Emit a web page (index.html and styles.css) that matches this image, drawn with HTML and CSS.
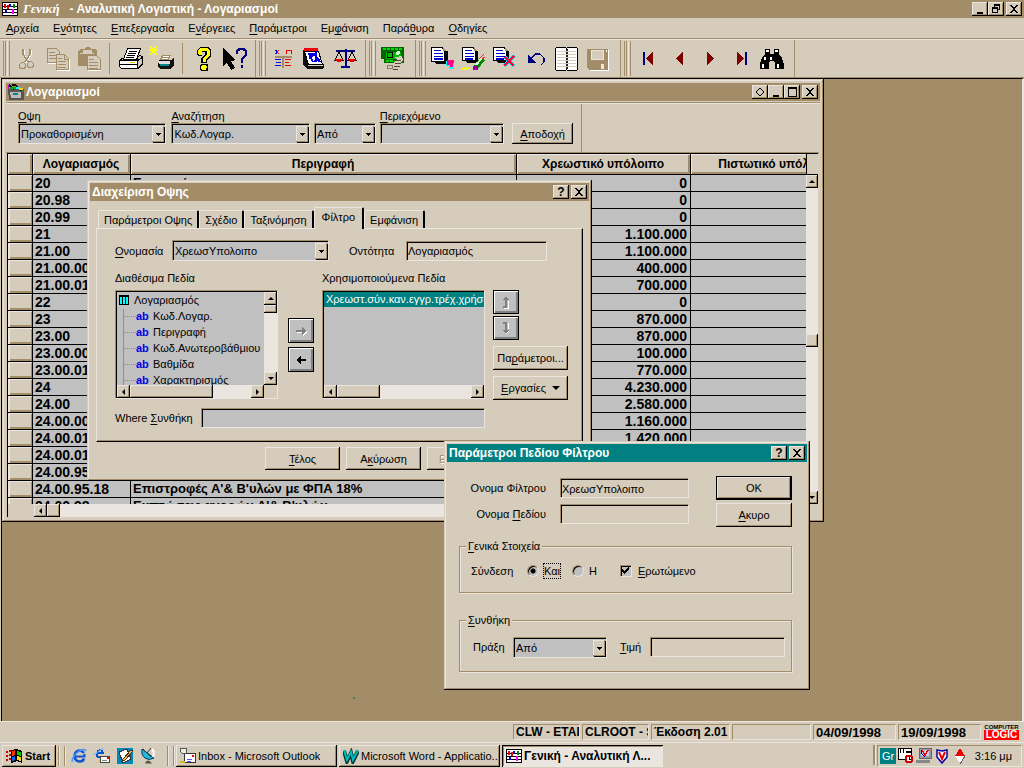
FILE: index.html
```html
<!DOCTYPE html>
<html lang="el">
<head>
<meta charset="utf-8">
<title>Γενική - Αναλυτική Λογιστική - Λογαριασμοί</title>
<link rel="stylesheet" href="styles.css">
</head>
<body>
<svg class="defs" aria-hidden="true">
  <symbol id="min" viewBox="0 0 12 10"><path d="M3 8h6v2H3z"/></symbol>
  <symbol id="close" viewBox="0 0 12 10"><path d="M2 1h2v1h1v1h2V2h1V1h2v1H9v1H8v1H7v2h1v1h1v1h1v1H8V8H7V7H5v1H4v1H2V8h1V7h1V6h1V4H4V3H3V2H2z"/></symbol>
  <symbol id="max" viewBox="0 0 12 10"><path d="M2 0h9v10H2zM3 2v7h7V2z" fill-rule="evenodd"/></symbol>
  <symbol id="restore" viewBox="0 0 12 10"><path d="M4 0h6v6H8V5h1V2H5v1H4zM2 3h6v6H2zM3 5v3h4V5z" fill-rule="evenodd"/></symbol>
  <symbol id="diamond" viewBox="0 0 12 10"><path d="M6 1l4 4-4 4-4-4z" fill="none" stroke="#000"/></symbol>
  <symbol id="grid" viewBox="0 0 16 16"><path d="M0 1h16v14H0z" fill="#000"/><path d="M1 2h14v12H1z" fill="#fff"/><path d="M1 5h14M1 8h14M1 11h14" stroke="#000"/><path d="M3 3v4M6 4v4" stroke="#e00" stroke-width="2"/><path d="M4 9v3M8 3v3" stroke="#00c" stroke-width="2"/><path d="M12 3v4" stroke="#080" stroke-width="2"/><path d="M11 8v5" stroke="#f0f" stroke-width="2"/></symbol>
</svg>

<header class="titlebar app-title">
  <svg class="i16"><use href="#grid"/></svg>
  <h1><i>Γενική</i><span>- Αναλυτική Λογιστική - Λογαριασμοί</span></h1>
  <div class="caps">
    <button class="cap" aria-label="Ελαχιστοποίηση"><svg><use href="#min"/></svg></button><button class="cap" aria-label="Επαναφορά"><svg><use href="#restore"/></svg></button><button class="cap apart" aria-label="Κλείσιμο"><svg><use href="#close"/></svg></button>
  </div>
</header>

<nav class="menu">
  <button><u>Α</u>ρχεία</button><button>Ε<u>ν</u>ότητες</button><button><u>Ε</u>πεξεργασία</button><button>Ε<u>ν</u>έργειες</button><button><u>Π</u>αράμετροι</button><button>Εμ<u>φ</u>άνιση</button><button>Παρά<u>θ</u>υρα</button><button><u>Ο</u>δηγίες</button>
</nav>

<div class="toolbar" role="toolbar">
  <div class="band"><i class="grip"></i>
    <button aria-label="Αποκοπή"><svg viewBox="0 0 24 24"><g fill="none" stroke="#fff" transform="translate(1 1)"><path d="M8 2v5l5 8M15 2v5l-5 8"/></g><g fill="none" stroke="#a28d68"><path d="M8 2v5l5 8M15 2v5l-5 8" stroke-width="1.500"/><circle cx="7.500" cy="18.500" r="3"/><circle cx="15.500" cy="17.500" r="3"/></g></svg></button>
    <button aria-label="Αντιγραφή"><svg viewBox="0 0 24 24"><g fill="none" stroke="#a28d68"><path d="M1.500 1.500h9l3 3v11h-12zM3 5h6M3 8h8M3 11h8"/><path d="M10.500 7.500h8l4 4v11h-12z" fill="#d5ccbb"/><path d="M18.500 8v4h4M12 11h4M12 14h8M12 17h8M12 20h8"/></g><path d="M2 16.500h8M11 23.500h12.500V12" stroke="#fff" fill="none"/></svg></button>
    <button aria-label="Επικόλληση"><svg viewBox="0 0 24 24"><path d="M1 4l2-2h4l2-2h3l2 2h4l2 2v15H1z" fill="#a28d68"/><path d="M6 3h9v3H6zM3 6h14v1H3z" fill="#d5ccbb"/><path d="M10.500 8.500h9l4 4v10h-13z" fill="#d5ccbb" stroke="#a28d68"/><path d="M12 12h5M12 15h9M12 18h9M12 21h9" stroke="#a28d68"/><path d="M11 23.500h13" stroke="#fff"/></svg></button>
    <i class="sep"></i>
    <button aria-label="Εκτύπωση"><svg viewBox="0 0 24 24"><path d="M8.500 1.500h13l-4 11h-13z" fill="#fff" stroke="#000"/><path d="M10 4.500h8M9 6.500h8M8 8.500h8M7 10.500h8" stroke="#000"/><path d="M.5 13.500l4-3M18 11l3-3 2.500 2-4 3.500z" fill="#d5ccbb" stroke="#000"/><path d="M.5 13.500h18v8h-16l-2-2z" fill="#fff" stroke="#000"/><path d="M1 17.500h18M19 13.500l4-3v7l-4 4" fill="none" stroke="#000"/><path d="M11 15h5v1h-5z" fill="#fc0"/></svg></button>
    <button aria-label="Γρήγορη εκτύπωση"><svg class="over" viewBox="0 0 24 24"><path d="M3.500-1v10M-1 3h9M0-1l7 9M7-1l-7 9" stroke="#ff0" stroke-width="1.500"/><path d="M12 8h9l-3 7H9z" fill="#a28d68"/><path d="M9 13h12l3-2v8l-4 3H10l-2-3z" fill="#111"/><path d="M9 14h11v3H9z" fill="#ddd"/><path d="M10 18h9" stroke="#088" stroke-width="2"/><path d="M13 9h6M12 11h6" stroke="#fff"/></svg></button>
    <i class="sep"></i>
    <button aria-label="Βοήθεια"><svg viewBox="0 0 24 24"><path d="M8 0h8l3 3v6l-4 4v3H9v-5l4-4V5h-3v4H6L5 7V3z" fill="#000"/><path d="M8 1h7l3 3v4l-4 4v3h-3v-4l4-4V4h-5v4H7L6 7V3z" fill="#ff0"/><path d="M9 17h6l1 1v5l-1 1H9l-1-1v-5z"/><path d="M10 18h4l1 2-1 3h-4l-1-3z" fill="#ff0"/></svg></button>
    <button aria-label="Τι είναι αυτό"><svg viewBox="0 0 24 24"><path d="M0 1v18l4-3 4 7 4-2-4-7 5-1z"/><path d="M14 7V4l3-2h3l3 2v4l-4 4v4M19 18v3" fill="none" stroke="#000080" stroke-width="2.500"/></svg></button>
  </div>
  <div class="band"><i class="grip"></i>
    <button aria-label="Λογιστικό σχέδιο"><svg viewBox="0 0 24 24"><path d="M4 3l4 4M8 3L4 7M15 7V3h5v4" stroke="#e00" fill="none"/><path d="M4 3h1v4" stroke="#00c" fill="none"/><path d="M4 9.500h17M11.500 9v12" stroke="#a28d68" stroke-width="2"/><path d="M4 12.500h6M5 15.500h5M4 18.500h6" stroke="#00e"/><path d="M14 12.500h6M14 15.500h4M14 18.500h6" stroke="#e00"/></svg></button>
    <button aria-label="Ημερολόγιο"><svg viewBox="0 0 24 24"><path d="M1 3h2l3 16h15l1-4v5l-2 2H5l-4-4z" fill="#111"/><path d="M2 1h14v3H2z" fill="#e00"/><path d="M2.500 4.500h14l4 13h-14z" fill="#fff" stroke="#000"/><path d="M7 7l4 8M7 11l7-5v9M12 7l6 8M6 7h6M12 14l6-1" fill="none" stroke="#00e" stroke-width="2"/></svg></button>
    <button aria-label="Ισοζύγιο"><svg viewBox="0 0 24 24"><path d="M3 4h19M12.500 2v17M8 20h9" stroke="#000080" stroke-width="2"/><path d="M6 5l-4 8h8zM19 5l-4 8h8z" fill="none" stroke="#000"/><path d="M2 12h8l-2 3H4zM15 12h8l-2 3h-4z" fill="#e00"/></svg></button>
  </div>
  <div class="band wide"><i class="grip"></i>
    <button aria-label="Ταμείο"><svg viewBox="0 0 24 24"><path d="M0 0h23v16H3V12H0z" fill="#060"/><path d="M2 2h19M5 14h9" stroke="#0d0" stroke-width="2" stroke-dasharray="3 1"/><path d="M5 5h15v7H5z" fill="#0b0"/><circle cx="9" cy="8" r="3" fill="none" stroke="#000"/><circle cx="17" cy="6" r="2" fill="#cfc"/><path d="M14 10l7-1 1 4-2 3 1 3-4 4-4 1-2-2 3-4-1-3 3-2z" fill="#d5ccbb"/><path d="M13 13h7M14 16h6M13 19h6M12 22h5" stroke="#543"/><path d="M6 18h5v3H6z" fill="#d5ccbb" stroke="#876"/></svg></button>
  </div>
  <div class="band wide"><i class="grip"></i>
    <button aria-label="Νέα εγγραφή"><svg viewBox="0 0 24 24"><path d="M13 4h4v11l-3 2H5l-2-2h10z"/><path d="M.5.5h11l2 4v10H.5z" fill="#fff" stroke="#000"/><path d="M12 0l3 4h-3z" fill="#a28d68"/><path d="M3 3.500h7M3 6.500h9M3 9.500h9M3 12h9" stroke="#00c" stroke-width="1.500"/><path d="M15 14h8v8h-5v-3h-3z" fill="#0ff"/><path d="M16 13h7v3h-1v4h-3v-2h-3z" fill="#f08"/></svg></button>
    <button aria-label="Μεταβολή εγγραφής"><svg viewBox="0 0 24 24"><path d="M13 4h3v10l-3 2H5l-2-2h10z"/><path d="M.5.5h11l2 4v9H.5z" fill="#fff" stroke="#000"/><path d="M12 0l3 4h-3z" fill="#a28d68"/><path d="M3 3.500h7M3 6.500h9M3 9.500h9M3 12h8" stroke="#00c" stroke-width="1.500"/><path d="M14 20l7-8" stroke="#080" stroke-width="5"/><path d="M14 18l6-7" stroke="#cfc" stroke-width="2"/><path d="M17 12l5-5M20 12l3-2" stroke="#f22"/><circle cx="13.500" cy="21" r="2.500" fill="#909"/><path d="M0 22l2-1 2 1 2-1 2 1" stroke="#ff0" stroke-width="2" fill="none"/></svg></button>
    <button aria-label="Διαγραφή εγγραφής"><svg viewBox="0 0 24 24"><path d="M13 4h3v10l-3 2H5l-2-2h10z"/><path d="M.5.500h11l2 4v9H.5z" fill="#fff" stroke="#000"/><path d="M12 0l3 4h-3z" fill="#a28d68"/><path d="M3 3.500h7M3 6.500h9M3 9.500h9M3 12h8" stroke="#00c" stroke-width="1.500"/><path d="M12 10l9 9M21 9L11 19" stroke="#0dd" stroke-width="3"/><path d="M12 10l9 9M21 9L11 19" stroke="#f04" stroke-width="2"/></svg></button>
    <button aria-label="Αναίρεση"><svg viewBox="0 0 24 24"><path d="M4 8v8h8z" fill="#000080"/><path d="M6 13l5-6h5l4 4v4l-3 3" fill="none" stroke="#000080" stroke-width="1.300"/></svg></button>
    <button aria-label="Βιβλίο"><svg viewBox="0 0 24 24"><path d="M.5 1.500l1-1h9l1 1 1-1h9l1 1v21l-1 1h-9l-1-1-1 1h-9l-1-1z" fill="#fff" stroke="#000"/><path d="M2 4.500h19M2 7.500h19M2 10.500h19M2 13.500h19M2 16.500h19M2 19.500h19" stroke="#d5ccbb"/><path d="M11.500 2v21" stroke="#222" stroke-width="2" stroke-dasharray="2 1"/></svg></button>
    <button aria-label="Αποθήκευση"><svg viewBox="0 0 24 24"><path d="M2 3h21v21H4l-2-2z" fill="#fff"/><path d="M1 2h21v21H3l-2-2z" fill="#a28d68"/><path d="M5 3h13v10H5zM15 17h3v5h-3z" fill="#eae6df"/><path d="M6 4h11v8H6z" fill="#d5ccbb"/><path d="M20 3h1v2h-1z" fill="#fff"/></svg></button>
  </div>
  <div class="band wide"><i class="grip"></i>
    <button aria-label="Πρώτη"><svg viewBox="0 0 24 24"><path d="M7 5h2v13H7z" fill="#000080"/><path d="M17 5v13l-7-6.500z" fill="#800000"/></svg></button>
    <button aria-label="Προηγούμενη"><svg viewBox="0 0 24 24"><path d="M16 5v13l-7-6.500z" fill="#800000"/></svg></button>
    <button aria-label="Επόμενη"><svg viewBox="0 0 24 24"><path d="M9 5v13l7-6.500z" fill="#800000"/></svg></button>
    <button aria-label="Τελευταία"><svg viewBox="0 0 24 24"><path d="M16 5h2v13h-2z" fill="#000080"/><path d="M8 5v13l7-6.500z" fill="#800000"/></svg></button>
    <button aria-label="Εύρεση"><svg viewBox="0 0 24 24"><path d="M5 2h5v5h4V2h5v5l3 4 2 6v5h-9v-6l-1-2h-4l-1 2v6H0v-5l2-6 3-4z"/><path d="M6 3h3v2H6zM15 3h3v2h-3zM2 17h2v4H2zM17 17h2v4h-2zM4 10h2v3H4zM10 10h2v3h-2z" fill="#fff"/></svg></button>
  </div>
</div>

<main class="mdi">
  <section class="window accounts">
    <div class="titlebar">
      <svg class="i16" viewBox="0 0 16 16"><path d="M0 5h16v11H1z" fill="#555"/><path d="M1 1l5 4M8 2l5 4M4 1h4" stroke="#000" stroke-width="2"/><path d="M2 4h6" stroke="#0a0" stroke-width="2"/><path d="M8 4h4" stroke="#0ff" stroke-width="2"/><path d="M11 5h4" stroke="#fc0" stroke-width="2"/><path d="M0 1h1v4H0z" fill="#c0c"/><path d="M2 8h11v6H3z" fill="#bbb"/><path d="M5 9h5v2H5z" fill="#088"/></svg>
      <h2>Λογαριασμοί</h2>
      <div class="caps"><button class="cap" aria-label="Καρφίτσωμα"><svg><use href="#diamond"/></svg></button><button class="cap" aria-label="Ελαχιστοποίηση"><svg><use href="#min"/></svg></button><button class="cap" aria-label="Μεγιστοποίηση"><svg><use href="#max"/></svg></button><button class="cap apart" aria-label="Κλείσιμο"><svg><use href="#close"/></svg></button></div>
    </div>
    <div class="accounts-body">
      <form class="filterbar">
        <div class="f f1"><label for="view"><u>Ο</u>ψη</label><span class="combo"><select id="view"><option>Προκαθορισμένη</option></select></span></div>
        <div class="f f2"><label for="search"><u>Α</u>ναζήτηση</label><span class="combo"><select id="search"><option>Κωδ.Λογαρ.</option></select></span></div>
        <div class="f f3"><span class="combo"><select aria-label="Τελεστής"><option>Από</option></select></span></div>
        <div class="f f4"><label for="content"><u>Π</u>εριεχόμενο</label><span class="combo"><select id="content"><option></option></select></span></div>
        <button type="button" class="btn accept"><u>Α</u>ποδοχή</button>
      </form>
      <div class="grid">
        <div class="rows">
          <table>
            <colgroup><col class="c0"><col class="c1"><col class="c2"><col class="c3"><col class="c3"></colgroup>
            <thead><tr><th></th><th>Λογαριασμός</th><th>Περιγραφή</th><th>Χρεωστικό υπόλοιπο</th><th>Πιστωτικό υπόλοιπο</th></tr></thead>
            <tbody>
              <tr><th></th><td>20</td><td>Εμπορεύματα</td><td>0</td><td></td></tr>
              <tr><th></th><td>20.98</td><td></td><td>0</td><td></td></tr>
              <tr><th></th><td>20.99</td><td></td><td>0</td><td></td></tr>
              <tr><th></th><td>21</td><td></td><td>1.100.000</td><td></td></tr>
              <tr><th></th><td>21.00</td><td></td><td>1.100.000</td><td></td></tr>
              <tr><th></th><td>21.00.00</td><td></td><td>400.000</td><td></td></tr>
              <tr><th></th><td>21.00.01</td><td></td><td>700.000</td><td></td></tr>
              <tr><th></th><td>22</td><td></td><td>0</td><td></td></tr>
              <tr><th></th><td>23</td><td></td><td>870.000</td><td></td></tr>
              <tr><th></th><td>23.00</td><td></td><td>870.000</td><td></td></tr>
              <tr><th></th><td>23.00.00</td><td></td><td>100.000</td><td></td></tr>
              <tr><th></th><td>23.00.01</td><td></td><td>770.000</td><td></td></tr>
              <tr><th></th><td>24</td><td></td><td>4.230.000</td><td></td></tr>
              <tr><th></th><td>24.00</td><td></td><td>2.580.000</td><td></td></tr>
              <tr><th></th><td>24.00.00</td><td></td><td>1.160.000</td><td></td></tr>
              <tr><th></th><td>24.00.01</td><td></td><td>1.420.000</td><td></td></tr>
              <tr><th></th><td>24.00.01</td><td></td><td></td><td></td></tr>
              <tr><th></th><td>24.00.95</td><td></td><td></td><td></td></tr>
              <tr><th></th><td>24.00.95.18</td><td>Επιστροφές Α'&amp; Β'υλών με ΦΠΑ 18%</td><td></td><td></td></tr>
              <tr><th></th><td>24.00.98</td><td>Εκπτώσεις αγορών Α'&amp; Β'υλών</td><td></td><td></td></tr>
            </tbody>
          </table>
        </div>
        <div class="vs"><div class="vs-head"></div><div class="bar v"><button class="up" aria-label="Πάνω"></button><i class="thumb t1"></i><button class="down" aria-label="Κάτω"></button></div></div>
        <div class="hs"><div class="bar h"><button class="left" aria-label="Αριστερά"></button><i class="thumb t2"></i></div></div>
      </div>
    </div>
  </section>

  <section class="window dialog view-dialog">
    <div class="titlebar"><h2>Διαχείριση Οψης</h2><div class="caps"><button class="cap q" aria-label="Βοήθεια">?</button><button class="cap apart" aria-label="Κλείσιμο"><svg><use href="#close"/></svg></button></div></div>
    <div class="dialog-body">
      <div class="tabs" role="tablist"><button role="tab">Παράμετροι Οψης</button><button role="tab">Σχέδιο</button><button role="tab">Ταξινόμηση</button><button role="tab" class="on" aria-selected="true">Φίλτρο</button><button role="tab">Εμφάνιση</button></div>
      <div class="page">
        <div class="line">
          <label class="name-l" for="fname"><u>Ο</u>νομασία</label><span class="combo name-c"><select id="fname"><option>ΧρεωσΥπολοιπο</option></select></span>
          <label class="ent-l" for="ent">Οντότητα</label><input id="ent" class="field ent" value="Λογαριασμός">
        </div>
        <div class="fields">
          <span class="lab">Διαθέσιμα Πεδία</span><span></span><span class="lab">Χρησιμοποιούμενα Πεδία</span><span></span>
          <div class="list">
            <div class="list-main">
              <ul class="tree">
                <li class="root"><svg viewBox="0 0 10 10"><path d="M0 0h10v10H0z"/><path d="M1 2h2v7H1zM4 2h2v7H4zM7 2h2v7H7z" fill="#0ff"/></svg>Λογαριασμός</li>
                <li><b>ab</b>Κωδ.Λογαρ.</li><li><b>ab</b>Περιγραφή</li><li><b>ab</b>Κωδ.Ανωτεροβάθμιου</li><li><b>ab</b>Βαθμίδα</li><li><b>ab</b>Χαρακτηρισμός</li>
              </ul>
              <div class="bar v"><button class="up" aria-label="Πάνω"></button><i class="thumb t3"></i><button class="down" aria-label="Κάτω"></button></div>
            </div>
            <div class="bar h inset"><button class="left" aria-label="Αριστερά"></button><i class="thumb t4"></i><button class="right" aria-label="Δεξιά"></button></div>
          </div>
          <div class="moves">
            <button class="sq" aria-label="Προσθήκη"><svg viewBox="0 0 16 16"><path d="M4 8h6V5l4 4-4 4v-3H4z" fill="#fff"/><path d="M3 7h6V4l4 4-4 4V9H3z" fill="#808080"/></svg></button>
            <button class="sq" aria-label="Αφαίρεση"><svg viewBox="0 0 16 16"><path d="M13 7v2H8v3L3 8l5-4v3z"/></svg></button>
          </div>
          <div class="list">
            <ul class="used"><li>Χρεωστ.σύν.καν.εγγρ.τρέχ.χρήσης</li></ul>
            <div class="bar h"><button class="left" aria-label="Αριστερά"></button><i class="thumb t5"></i><button class="right" aria-label="Δεξιά"></button></div>
          </div>
          <div class="side">
            <button class="sq" aria-label="Πάνω"><svg viewBox="0 0 16 16"><path d="M8 2l3 4H9v8H5v-2h2V6H5z" fill="#808080"/><path d="M10 7v7H6" fill="none" stroke="#fff"/></svg></button>
            <button class="sq" aria-label="Κάτω"><svg viewBox="0 0 16 16"><path d="M8 14l3-4H9V2H5v2h2v6H5z" fill="#808080"/><path d="M10 3v6M11 11l-3 3" fill="none" stroke="#fff"/></svg></button>
            <button class="btn">Πα<u>ρ</u>άμετροι...</button>
            <button class="btn"><u>Ε</u>ργασίες<i class="tri"></i></button>
          </div>
        </div>
        <div class="line"><label class="where-l" for="where">Where <u>Σ</u>υνθήκη</label><input id="where" class="field where"></div>
      </div>
      <div class="foot"><button class="btn"><u>Τ</u>έλος</button><button class="btn">Α<u>κ</u>ύρωση</button><button class="btn" disabled>Εφαρμογή</button></div>
    </div>
  </section>

  <section class="window dialog field-dialog">
    <div class="titlebar"><h2>Παράμετροι Πεδίου Φίλτρου</h2><div class="caps"><button class="cap q" aria-label="Βοήθεια">?</button><button class="cap apart" aria-label="Κλείσιμο"><svg><use href="#close"/></svg></button></div></div>
    <form class="field-body">
      <div class="top">
        <div class="pairs">
          <label for="n1">Ονομα Φίλτρου</label><input id="n1" class="field" value="ΧρεωσΥπολοιπο">
          <label for="n2">Ονομα <u>Π</u>εδίου</label><input id="n2" class="field">
        </div>
        <div class="oks"><button type="button" class="btn default">OK</button><button type="button" class="btn"><u>Α</u>κυρο</button></div>
      </div>
      <fieldset class="g1"><legend><u>Γ</u>ενικά Στοιχεία</legend>
        <div class="opts"><span class="conn">Σύνδεση</span>
        <input type="radio" name="c" id="and" checked><label for="and" class="focus">Και</label>
        <input type="radio" name="c" id="or"><label for="or">Η</label>
        <input type="checkbox" id="ask" checked><label for="ask"><u>Ε</u>ρωτώμενο</label></div>
      </fieldset>
      <fieldset class="g2"><legend><u>Σ</u>υνθήκη</legend>
        <div class="opts"><label for="op" class="op-l">Πράξη</label><span class="combo op-c"><select id="op"><option>Από</option></select></span>
        <label for="val" class="val-l"><u>Τ</u>ιμή</label><input id="val" class="field val"></div>
      </fieldset>
    </form>
  </section>
  <i class="speck"></i>
</main>

<footer class="status">
  <span class="w1">CLW - ETAIRIA</span><span class="w1">CLROOT - SYS</span><span class="w2">Έκδοση 2.01</span><span class="w2"></span><span class="w3">04/09/1998</span><span class="w3">19/09/1998</span>
  <div class="brand"><b>COMPUTER</b><b>LOGIC</b></div>
</footer>

<div class="taskbar">
  <button class="task start"><svg viewBox="0 0 16 16"><path d="M0 3h2v2H0zM0 7h2v2H0zM0 11h2v2H0zM3 2h2v2H3zM3 6h2v2H3zM3 10h2v2H3z" fill="#c00"/><path d="M5 2l5-1 6 2v12l-5-2-6 2z"/><path d="M6 3l3-1v5L6 8z" fill="#f30"/><path d="M11 3l4 1v4l-4-1z" fill="#0c0"/><path d="M6 9l3-1v4l-3 1z" fill="#06f"/><path d="M11 8l4 1v4l-4-1z" fill="#fd0"/></svg>Start</button>
  <i class="tsep"></i>
  <div class="quick">
    <button aria-label="Internet Explorer"><svg viewBox="0 0 16 16" class="smooth"><path d="M13 5Q11 2.500 8 2.500 3.500 3.500 3.500 9q1 4.500 5.500 4.500 3 0 4-3" fill="none" stroke="#15c" stroke-width="2.500"/><path d="M4 8.500h9.500V6" fill="none" stroke="#15c" stroke-width="2"/><path d="M1.500 14Q0 10 7 4 14-.5 15 3" fill="none" stroke="#49f" stroke-width="1.500"/></svg></button>
    <button aria-label="Outlook Express"><svg viewBox="0 0 16 16"><path d="M9 4Q5 0 3 5t6 4M3 5h7" fill="none" stroke="#05c" stroke-width="2"/><path d="M0 7L9 0" stroke="#6af"/><path d="M6.500 8.500h9v6h-9z" fill="#fff" stroke="#444"/><path d="M8 12.500h5" stroke="#888"/><path d="M13 9h2v2h-2z" fill="#e00"/><path d="M4 14l2-3v4z" fill="#fc0"/></svg></button>
    <button aria-label="Επιφάνεια εργασίας"><svg viewBox="0 0 16 16"><path d="M0 0h16v16H0z" fill="#08b"/><path d="M2 4l8-3 4 10-8 4z" fill="#fff" stroke="#333"/><path d="M6 11l8-9 2 1-8 9-3 1z" fill="#fb4" stroke="#432"/></svg></button>
    <button aria-label="Κανάλια"><svg viewBox="0 0 16 16" class="smooth"><path d="M2 1l12 9q-5 3-9 0T2 1z" fill="#2bd" stroke="#036"/><path d="M3 1l8 8M11 0L7 5" stroke="#333"/><path d="M12 1q3 3 1 8" fill="none" stroke="#fff" stroke-width="2"/><path d="M5 15.500q1-3 3-3t4 3z" fill="#555"/></svg></button>
  </div>
  <i class="tsep"></i>
  <button class="task app"><svg viewBox="0 0 16 16"><path d="M4.500 5.500h11v9h-11z" fill="#fff" stroke="#333"/><path d="M7 11.500h5M7 13.500h4" stroke="#55f"/><path d="M12 7h2v2h-2z" fill="#e00"/><path d="M.5.500h6v5h-4l-2-2z" fill="#eed" stroke="#555"/><path d="M0 13h5v2H0z" fill="#cb3"/></svg><span>Inbox - Microsoft Outlook</span></button>
  <button class="task app"><svg viewBox="0 0 16 16" class="smooth"><path d="M1 3l3 10 4-8 2 8 5-10" fill="none" stroke="#033" stroke-width="4"/><path d="M1 2l3 10 4-8 2 8 5-10" fill="none" stroke="#0bb" stroke-width="2"/></svg><span>Microsoft Word - Applicatio...</span></button>
  <button class="task app active"><svg><use href="#grid"/></svg><span>Γενική - Αναλυτική Λ...</span></button>
  <div class="end"><i class="tsep one"></i>
  <div class="tray"><b class="lang">Gr</b>
    <svg viewBox="0 0 16 16"><path d="M.5.500h13v11H.5z" fill="#fff" stroke="#000"/><path d="M1 3h12v2H1z"/><path d="M1 1h7v5H1z" fill="#fff"/><path d="M2.500 1v4M5.500 1v4" stroke="#000"/><circle cx="11" cy="11" r="3.500" fill="#fff" stroke="#c00" stroke-width="2"/><path d="M11 9v2h2" fill="none" stroke="#000"/></svg>
    <svg viewBox="0 0 16 16"><path d="M3 0h12v10H3z" fill="#999" stroke="#666"/><path d="M5 2h8v6H5z" fill="#cce"/><path d="M6 2l3 5 3-5" fill="none" stroke="#e00" stroke-width="1.500"/><path d="M5 2v3l4 4" fill="none" stroke="#00c"/><path d="M0 12h14v3H0z" fill="#888"/></svg>
    <svg viewBox="0 0 16 16" class="smooth"><path d="M3 2l5 1 5-1v7l-5 6-5-6z" fill="#fff" stroke="#00a" stroke-width="1.500"/><path d="M5 4l3 7 3-7" fill="none" stroke="#e00" stroke-width="2"/></svg>
    <svg viewBox="0 0 16 16"><path d="M8 0l5 8H3z" fill="#e00"/><path d="M3 8h10l-5 7z" fill="#fff"/><path d="M13 8l-5 8" stroke="#666"/></svg>
    <time>3:16 μμ</time></div></div>
</div>
</body>
</html>
```
FILE: styles.css
```css
:root {
  --face: #d5ccbb;
  --shade: #a28d68;
  --light: #eae6df;
  --gray: #c0c0c0;
}
* { box-sizing: border-box; }
body {
  margin: 0;
  height: 100vh;
  display: flex;
  flex-direction: column;
  overflow: hidden;
  background: var(--face);
  color: #000;
  font: 11px/14px "Liberation Sans", Arial, sans-serif;
}
button, input, select { font: inherit; color: inherit; border: 0; padding: 0; margin: 0; background: none; border-radius: 0; }
h1, h2, ul { margin: 0; padding: 0; list-style: none; }
u { text-decoration: underline; text-underline-offset: 2px; text-decoration-skip-ink: none; }
svg { display: block; shape-rendering: crispEdges; flex: none; }
.smooth { shape-rendering: auto; }
.over { overflow: visible; }
.defs { position: absolute; width: 0; height: 0; }

/* title bars */
.titlebar { display: flex; align-items: center; height: 18px; flex: none; background: var(--shade); color: #fff; padding: 0 2px; white-space: nowrap; }
.titlebar h1, .titlebar h2 { font-size: 12px; font-weight: bold; line-height: 18px; }
.i16 { width: 16px; height: 16px; }
.app-title h1 { display: flex; gap: 10px; padding-left: 5px; }
.app-title i { font-family: "Liberation Serif", serif; font-size: 13px; }
.caps { margin-left: auto; display: flex; }
.cap { width: 16px; height: 14px; background: var(--face); color: #000; display: grid; place-items: center; box-shadow: inset -1px -1px #000, inset 1px 1px var(--light), inset -2px -2px var(--shade); }
.cap svg { width: 12px; height: 10px; }
.cap.apart { margin-left: 2px; }
.q { font-size: 12px; font-weight: bold; line-height: 12px; }

/* menu */
.menu { display: flex; gap: 14px; height: 21px; padding: 0 6px; align-items: center; border-bottom: 1px solid var(--shade); flex: none; }

/* toolbar */
.toolbar { display: flex; height: 39px; flex: none; border-top: 1px solid var(--light); border-bottom: 1px solid var(--shade); }
.band { display: flex; align-items: center; padding: 0 5px 0 3px; border-right: 1px solid var(--shade); }
.band.wide { padding-right: 7px; }
.band button { width: 31px; height: 32px; display: grid; place-items: center; }
.band svg { width: 24px; height: 24px; }
.grip { width: 7px; height: 35px; margin-right: 1px; border: solid; border-width: 0 1px; border-color: var(--light) var(--shade); background: linear-gradient(90deg, transparent 0 1px, var(--shade) 1px 2px, transparent 2px 3px, var(--light) 3px 4px, transparent 4px); }
.sep { width: 1px; height: 31px; background: var(--shade); margin: 0 5px; }

/* mdi */
.mdi { flex: 1; min-height: 0; position: relative; overflow: hidden; background: var(--shade); border: 1px solid #000; border-right: 2px solid var(--light); border-bottom: 0; margin-left: 1px; }
.window { position: absolute; background: var(--face); padding: 3px; display: flex; flex-direction: column; box-shadow: inset -1px -1px #000, inset 1px 1px var(--face), inset -2px -2px var(--shade), inset 2px 2px var(--light); }
.accounts { left: 0; top: 0; width: 822px; padding: 4px 4px 5px; }
.view-dialog { left: 85px; top: 101px; width: 505px; }
.field-dialog { left: 442px; top: 362px; width: 366px; }
.field-dialog .titlebar { background: #008080; }
.accounts h2 { padding-left: 2px; }
.speck { position: absolute; left: 351px; top: 618px; width: 2px; height: 2px; background: #2a8a50; }

.accounts-body { border-top: 1px solid var(--shade); margin-top: 1px; box-shadow: inset 0 1px var(--light); padding-top: 1px; }
.filterbar { display: flex; align-items: flex-end; width: 576px; height: 48px; padding: 0 8px 8px 12px; gap: 4px; border-right: 1px solid var(--shade); }
.f { display: flex; flex-direction: column; }
.f1 { width: 149px; margin-right: 1px; } .f2 { width: 139px; } .f3 { width: 62px; } .f4 { width: 125px; }
.combo { position: relative; display: flex; height: 21px; background: var(--gray); border: 1px solid; border-color: var(--shade) var(--light) var(--light) var(--shade); box-shadow: inset 1px 1px #000; }
.combo select { appearance: none; width: 100%; padding: 1px 14px 0 2px; outline: 0; }
.combo::after { content: ""; position: absolute; right: 1px; top: 2px; bottom: 1px; width: 12px; pointer-events: none; background: linear-gradient(#000, #000) 4px 7px/5px 1px no-repeat, linear-gradient(#000, #000) 5px 8px/3px 1px no-repeat, linear-gradient(#000, #000) 6px 9px/1px 1px no-repeat, var(--face); box-shadow: inset -1px -1px var(--shade), inset 1px 1px var(--light), 1px 1px #000; }
.btn { height: 24px; background: var(--face); box-shadow: inset -1px -1px #000, inset 1px 1px var(--light), inset -2px -2px var(--shade); }
.btn:disabled { color: var(--shade); text-shadow: 1px 1px #fff; }
.accept { width: 61px; height: 21px; margin-left: 4px; }
.field { height: 20px; width: 100%; padding: 1px 1px 0 1px; border: 1px solid; border-color: var(--shade) var(--light) var(--light) var(--shade); box-shadow: inset 1px 1px #000; outline: 0; }

/* data grid */
.grid { display: grid; grid-template-columns: 1fr 12px; grid-template-rows: 351px 13px; padding: 0 1px 0 1px; margin-right: 1px; border-top: 1px solid var(--shade); }
.rows { overflow: hidden; border-top: 1px solid #000; border-left: 1px solid #000; }
table { table-layout: fixed; width: 857px; border-collapse: separate; border-spacing: 0; font-size: 14px; font-weight: bold; }
.c0 { width: 25px; } .c1 { width: 98px; } .c2 { width: 386px; } .c3 { width: 174px; }
td, th { padding: 0 3px 0 2px; border: solid #000; border-width: 0 1px 1px 0; height: 17px; line-height: 16px; white-space: nowrap; overflow: hidden; }
td { background: var(--gray); }
td:nth-child(3) { font-size: 13px; }
thead th { height: 21px; font-size: 12px; }
th { background: var(--face); box-shadow: inset 1px 1px var(--light), inset -2px -2px var(--shade); }
tbody th { box-shadow: inset 2px 1px var(--light), inset -1px -2px var(--shade); }
td:nth-child(4) { text-align: right; }
.vs { display: flex; flex-direction: column; }
.vs-head { height: 22px; border: solid #000; border-width: 1px 0 1px 1px; flex: none; }
.vs .bar { flex: 1; }
.hs { padding-left: 26px; border-left: 1px solid #000; background: var(--face); }
.bar { display: flex; background: var(--light); position: relative; }
.bar.v { flex-direction: column; width: 13px; }
.vs .bar.v { width: 12px; }
.bar.h { height: 13px; }
.bar button, .thumb { background: var(--face); width: 13px; height: 13px; flex: none; box-shadow: inset -1px -1px #000, inset 1px 1px var(--light), inset -2px -2px var(--shade); display: grid; place-items: center; }
.bar button::before { content: ""; border: 3px solid transparent; }
.bar .up::before { border-bottom-color: #000; border-top: 0; }
.bar .down::before { border-top-color: #000; border-bottom: 0; }
.bar .left::before { border-right-color: #000; border-left: 0; }
.bar .right::before { border-left-color: #000; border-right: 0; }
.down { margin-top: auto; }
.right { margin-left: auto; }
.t1 { margin-top: 146px; width: 12px; }
.bar .t3 { height: 8px; } .bar .t4 { width: 83px; } .bar .t5 { width: 43px; }
.vs .bar button { width: 12px; }

/* view dialog */
.dialog-body { padding: 6px 6px 8px 6px; }
.tabs { display: flex; align-items: flex-end; padding-left: 2px; }
.tabs button { height: 18px; padding: 1px 5px 0; border: 1px solid var(--light); border-bottom: 0; border-right: 2px solid #000; border-radius: 2px 2px 0 0; }
.tabs .on { height: 22px; margin: 0 0 -1px; padding: 0 7px 4px; background: var(--face); z-index: 1; }
.page { border: 1px solid var(--light); border-right-color: #000; border-bottom-color: #000; box-shadow: inset -1px -1px var(--shade); padding: 11px 14px 13px 18px; }
.line { display: flex; align-items: center; }
.name-l { width: 57px; } .name-c { width: 157px; } .ent-l { width: 57px; margin-left: 20px; } .ent { width: 141px; }
.where-l { width: 86px; } .where { width: 284px; background: var(--gray); }
.fields { display: grid; grid-template-columns: 165px 26px 163px 75px; column-gap: 8px; margin-bottom: 8px; }
.lab { padding: 10px 0 5px; white-space: nowrap; }
.list { height: 109px; width: 163px; background: var(--gray); border: 1px solid; border-color: var(--shade) var(--light) var(--light) var(--shade); padding: 1px 0 0 1px; box-shadow: inset 1px 1px #000; display: flex; flex-direction: column; overflow: hidden; }
.list-main { display: flex; flex: 1; min-height: 0; }
.tree { flex: 1; overflow: hidden; background: linear-gradient(var(--shade), var(--shade)) 6px 17px/1px 100% no-repeat; }
.tree li { display: flex; align-items: center; height: 16px; padding-left: 19px; white-space: nowrap; }
.tree li b { width: 17px; flex: none; color: #00e; }
.tree li:not(.root)::before { content: ""; width: 12px; margin-left: -12px; border-top: 1px dotted var(--shade); }
.tree .root { padding-left: 2px; }
.root svg { width: 10px; height: 10px; margin-right: 5px; }
.inset { margin-right: 13px; box-shadow: 13px 0 var(--face); }
.moves { display: grid; gap: 4px; align-content: center; }
.sq { width: 26px; height: 24px; background: var(--gray); border: 1px solid #000; display: grid; place-items: center; box-shadow: inset 1px 1px #fff, inset -2px -2px #808080; }
.moves .sq { height: 25px; }
.sq svg { width: 16px; height: 16px; }
.side { display: flex; flex-direction: column; gap: 2px; }
.side .btn { margin-top: 4px; height: 24px; }
.tri { display: inline-block; border: 4px solid transparent; border-top-color: #000; border-bottom: 0; margin: 0 0 2px 6px; }
.used { flex: 1; }
.used li { background: #008080; color: #fff; height: 15px; line-height: 15px; padding-left: 2px; white-space: nowrap; overflow: hidden; }
.foot { display: flex; gap: 6px; padding: 5px 0 0 169px; }
.foot .btn { width: 75px; height: 23px; }

/* field dialog */
.field-body { padding: 14px 15px 15px 12px; }
.top { display: flex; justify-content: space-between; }
.pairs { display: grid; grid-template-columns: 87px 129px; gap: 6px 14px; padding-top: 2px; align-content: start; align-items: center; text-align: right; }
.oks { display: grid; gap: 3px; width: 76px; }
.default { border: 1px solid #000; }
fieldset { margin: 0; padding: 0 6px 0 10px; border: 1px solid var(--shade); box-shadow: 1px 1px var(--light), inset 1px 1px var(--light); min-width: 0; }
legend { padding: 0 2px; margin-left: -4px; background: var(--face); }
.g1 { margin-top: 12px; height: 54px; } .g2 { margin-top: 20px; height: 59px; }
.opts { display: flex; align-items: center; height: 33px; padding-top: 3px; }
.g2 .opts { height: 40px; padding-top: 0; }
.conn { width: 57px; padding-left: 1px; }
input[type=radio], input[type=checkbox] { appearance: none; width: 12px; height: 12px; background: var(--gray); border: 1px solid; border-color: var(--shade) var(--light) var(--light) var(--shade); box-shadow: inset 1px 1px #000; flex: none; margin-right: 5px; }
input[type=radio] { border-radius: 50%; }
#and:checked { background: radial-gradient(circle, #000 0 2px, var(--gray) 3px); }
#ask {
  --k: linear-gradient(#000, #000);
  background: var(--k) 1px 3px/1px 3px, var(--k) 2px 4px/1px 3px, var(--k) 3px 5px/1px 3px, var(--k) 4px 4px/1px 3px, var(--k) 5px 3px/1px 3px, var(--k) 6px 2px/1px 3px, var(--k) 7px 1px/1px 3px;
  background-repeat: no-repeat;
  background-color: var(--gray);
  margin-left: 23px;
  margin-right: 6px;
}
.focus { outline: 1px dotted #000; margin-right: 12px; }
.op-l { width: 43px; padding-left: 3px; flex: none; } .op-c { width: 94px; flex: none; } .val-l { margin-left: 13px; width: 30px; flex: none; } .val { flex: 1; min-width: 0; }

/* status bar */
.status { display: flex; justify-content: flex-end; align-items: center; gap: 2px; height: 21px; flex: none; padding-right: 5px; border-top: 1px solid var(--light); font-size: 12px; font-weight: bold; }
.status span { height: 16px; line-height: 15px; padding-left: 2px; overflow: hidden; white-space: nowrap; border: 1px solid; border-color: var(--shade) var(--light) var(--light) var(--shade); }
.w1 { width: 67px; } .w2 { width: 79px; } .status .w3 { width: 83px; font-size: 13px; }
.brand { width: 35px; height: 15px; margin-left: 1px; display: flex; flex-direction: column; text-align: center; overflow: hidden; }
.brand b:first-child { font-size: 6px; line-height: 5px; }
.brand b:last-child { background: #f00; color: #fff; font-size: 10px; line-height: 10px; }

/* taskbar */
.taskbar { display: flex; align-items: center; height: 26px; flex: none; padding: 0 2px; border-top: 1px solid var(--light); white-space: nowrap; }
.task { height: 22px; display: flex; align-items: center; gap: 3px; padding: 0 4px; box-shadow: inset -1px -1px #000, inset 1px 1px var(--light), inset -2px -2px var(--shade); }
.task svg { width: 16px; height: 16px; }
.task span { overflow: hidden; }
.start { width: 54px; font-weight: bold; }
.app { width: 161px; margin-right: 2px; padding: 0 2px 0 4px; gap: 2px; text-align: left; }
.active { background: var(--light); font-size: 12px; font-weight: bold; box-shadow: inset 1px 1px #000, inset -1px -1px var(--light), inset 2px 2px var(--shade); }
.tsep { width: 7px; height: 20px; margin: 0 2px; border: solid; border-width: 0 1px; border-color: var(--shade); box-shadow: 1px 0 var(--light), inset 1px 0 var(--light); }
.tsep.one { width: 1px; }
.quick { display: flex; gap: 7px; padding: 0 9px 0 4px; }
.quick svg, .tray svg { width: 16px; height: 16px; }
.end { margin-left: auto; display: flex; }
.tray { display: flex; align-items: center; gap: 2px; height: 22px; width: 145px; padding-left: 2px; border: 1px solid; border-color: var(--shade) var(--light) var(--light) var(--shade); }
.lang { width: 16px; height: 16px; background: #008080; color: #fff; font-weight: normal; line-height: 16px; text-align: center; }
.tray time { margin-left: auto; padding-right: 9px; }
```
